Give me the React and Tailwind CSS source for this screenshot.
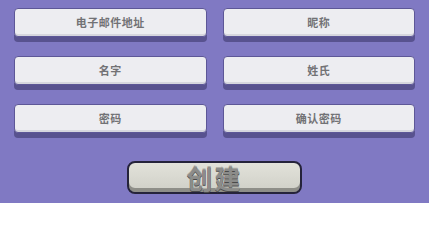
import React from "react";

const fields = ["电子邮件地址", "昵称", "名字", "姓氏", "密码", "确认密码"];

const Field = ({ label }) => (
  <div className="h-[29px] rounded-[4px] border border-[#5d5797] bg-[#ededf1] shadow-[0_5px_0_#58528f,inset_0_-2px_0_#d6d6de] flex items-center justify-center">
    <span className="text-[11px] font-bold text-[#727275] tracking-[0.5px]">{label}</span>
  </div>
);

const App = () => {
  return (
    <div
      className="w-[429px] h-[203px] bg-[#8079c3] px-[14px] pt-[8px] flex flex-col overflow-hidden"
      style={{ fontFamily: '"Noto Sans CJK SC", "Noto Sans", sans-serif' }}
    >
      <div className="grid grid-cols-2 gap-x-[16px] gap-y-[19px]">
        {fields.map((f) => (
          <Field key={f} label={f} />
        ))}
      </div>
      <div className="flex justify-center mt-[28px]">
        <button className="w-[175px] h-[33px] rounded-[8px] border-2 border-[#25233a] bg-gradient-to-b from-[#e2e2da] to-[#cfcfc7] shadow-[inset_0_-4px_0_#8e8e88] flex items-center justify-center">
          <span className="text-[26px] leading-none font-bold text-[#8c8c8a] tracking-[2px] [text-shadow:0_1px_0_#4a4a4a,0_-1px_0_#b0b0a8]">
            创建
          </span>
        </button>
      </div>
    </div>
  );
};

export default App;
